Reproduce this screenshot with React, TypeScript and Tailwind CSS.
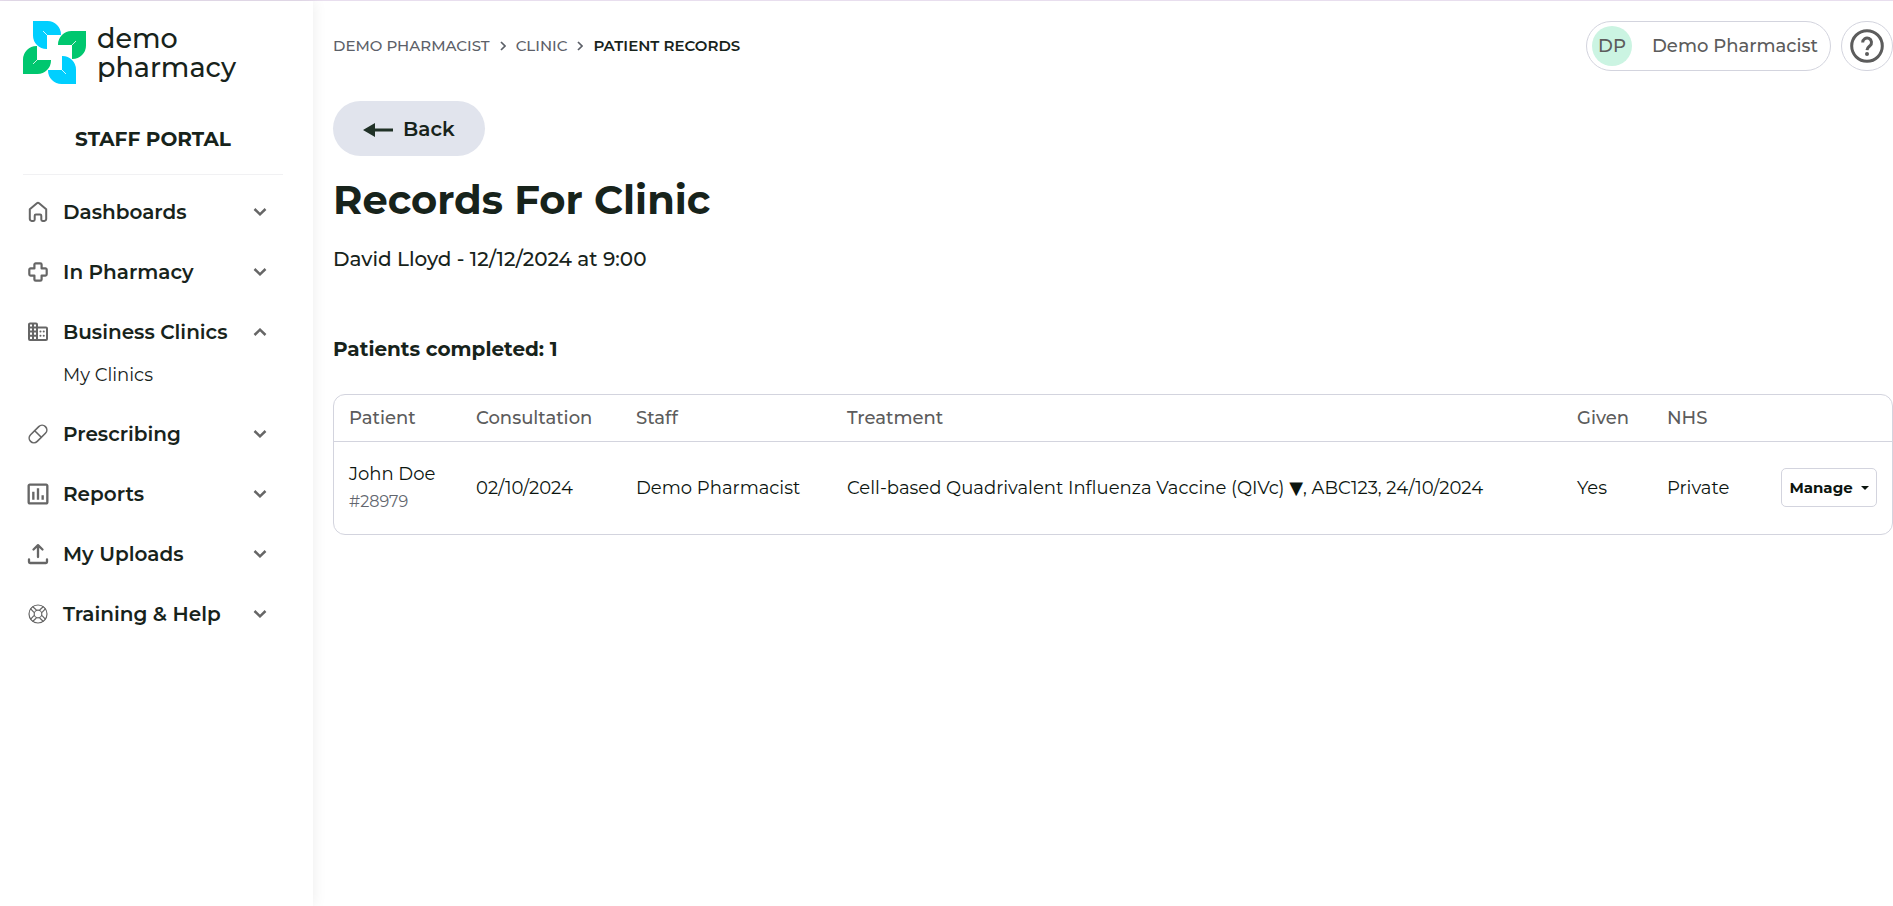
import { useState } from "react";
import type { ReactNode } from "react";
import { MdOutlineInsertChart } from "react-icons/md";

type NavItem = {
  label: string;
  icon: ReactNode;
  children?: string[];
};

const stroke = {
  viewBox: "0 0 20 20",
  fill: "none",
  stroke: "currentColor",
  strokeWidth: 2,
  strokeLinecap: "round",
  strokeLinejoin: "round",
  className: "size-5 shrink-0 overflow-visible",
  "aria-hidden": true,
} as const;

const HomeIcon = () => (
  <svg {...stroke}>
    <path d="M1.8 7.2 8.9 1.2a1.7 1.7 0 0 1 2.2 0l7.1 6v9.9a1.8 1.8 0 0 1-1.8 1.8h-1.8a1.3 1.3 0 0 1-1.3-1.3v-3.9a1.2 1.2 0 0 0-1.2-1.2H7.9a1.2 1.2 0 0 0-1.2 1.2v3.9a1.3 1.3 0 0 1-1.3 1.3H3.6a1.8 1.8 0 0 1-1.8-1.8Z" />
  </svg>
);

const CrossIcon = () => (
  <svg {...stroke} strokeWidth={2.2}>
    <path d="M7.7 1.3h4.6a1.3 1.3 0 0 1 1.3 1.3v3.8h3.8a1.3 1.3 0 0 1 1.3 1.3v4.6a1.3 1.3 0 0 1-1.3 1.3h-3.8v3.8a1.3 1.3 0 0 1-1.3 1.3H7.7a1.3 1.3 0 0 1-1.3-1.3v-3.8H2.6a1.3 1.3 0 0 1-1.3-1.3V7.7a1.3 1.3 0 0 1 1.3-1.3h3.8V2.6a1.3 1.3 0 0 1 1.3-1.3Z" />
  </svg>
);

const BuildingIcon = () => (
  <svg {...stroke}>
    <path d="M1 2.5a1 1 0 0 1 1-1h6a1 1 0 0 1 1 1v3h9a1 1 0 0 1 1 1V17a1 1 0 0 1-1 1H2a1 1 0 0 1-1-1ZM5 1.5V18M9 5.5V18M1 5.5h8M1 9.6h8M1 13.8h8" />
    <path d="M12.4 9.6h.1M12.4 13.8h.1M15.7 9.6h.1M15.7 13.8h.1" />
  </svg>
);

const PillIcon = () => (
  <svg {...stroke} strokeWidth={1.6}>
    <rect x="-0.5" y="5.3" width="21" height="9.4" rx="4.7" transform="rotate(-45 10 10)" />
    <path d="m6.7 6.7 6.6 6.6" />
  </svg>
);

const UploadIcon = () => (
  <svg {...stroke} strokeWidth={2.3}>
    <path d="M10 13V1.5M5.500 5.500 10 1.200l4.500 4.300M1 15.500V18a1 1 0 0 0 1 1h16a1 1 0 0 0 1-1v-2.500" />
  </svg>
);

const LifebuoyIcon = () => (
  <svg {...stroke} strokeWidth={1.2}>
    <circle cx="10" cy="10" r="9" />
    <circle cx="10" cy="10" r="3.8" />
    <path d="m4.800 2.700 3.300 3m-5.400-.9 3 3.300M15.200 2.700l-3.300 3m5.400-.9-3 3.300M4.800 17.300l3.300-3m-5.400.9 3-3.300M15.200 17.300l-3.300-3m5.400.9-3-3.300" />
  </svg>
);

const NAV: NavItem[] = [
  { label: "Dashboards", icon: <HomeIcon /> },
  { label: "In Pharmacy", icon: <CrossIcon /> },
  { label: "Business Clinics", icon: <BuildingIcon />, children: ["My Clinics"] },
  { label: "Prescribing", icon: <PillIcon /> },
  { label: "Reports", icon: <MdOutlineInsertChart className="-m-1 size-7 shrink-0" aria-hidden /> },
  { label: "My Uploads", icon: <UploadIcon /> },
  { label: "Training & Help", icon: <LifebuoyIcon /> },
];

function Chevron({ open }: { open: boolean }) {
  return (
    <svg viewBox="0 0 14 8" className="w-3.5 shrink-0" fill="none" stroke="currentColor" strokeWidth="2.5" aria-hidden>
      <path d={open ? "M1.5 7 7 1.7 12.5 7" : "M1.5 1 7 6.3 12.5 1"} />
    </svg>
  );
}

function Logo() {
  return (
    <a href="#" className="flex items-center gap-[11px] text-[#17231b]">
      <svg viewBox="0 0 63 63" className="size-[63px] shrink-0" aria-hidden>
        <path fill="#00cfff" d="M10 0h14.500A13.500 13.500 0 0 1 38 13.500V14H24v14h-.500A13.500 13.500 0 0 1 10 14.500Z" />
        <path fill="#00c76f" d="M63 10v14.500A13.500 13.500 0 0 1 49.500 38H49V24H35v-.500A13.500 13.500 0 0 1 48.500 10Z" />
        <path fill="#00cfff" d="M53 63H38.500A13.500 13.500 0 0 1 25 49.500V49h14V35h.500A13.500 13.500 0 0 1 53 48.500Z" />
        <path fill="#00c76f" d="M0 53V38.500A13.500 13.500 0 0 1 13.500 25h.500v14h14v.500A13.500 13.500 0 0 1 14.500 53Z" />
        <path stroke="#fff" strokeWidth=".8" d="m20 10 4 4M53 20l-4 4M43 53l-4-4M10 43l4-4" />
      </svg>
      <span className="text-[27px] leading-[29px] font-medium">
        <span className="block">demo</span>
        <span className="block">pharmacy</span>
      </span>
    </a>
  );
}

function Sidebar() {
  const [open, setOpen] = useState("Business Clinics");

  return (
    <aside className="w-[313px] shrink-0 pt-5 pr-[30px] pl-[23px] shadow-[0_0_14px_rgba(0,0,0,0.08)]">
      <Logo />
      <p className="mt-[39px] text-center text-xl leading-8 font-bold">STAFF PORTAL</p>
      <hr className="mt-[19px] border-[#f1f1f3]" />
      <nav className="mt-[7px]" aria-label="Main">
        {NAV.map((item) => {
          const isOpen = open === item.label;
          return (
            <div key={item.label}>
              <button
                type="button"
                onClick={() => setOpen(isOpen ? "" : item.label)}
                aria-expanded={isOpen}
                className="flex h-[60px] w-full items-center pr-4 pl-[5px] text-left text-[#666]"
              >
                {item.icon}
                <span className="ml-[15px] flex-1 text-xl font-semibold text-[#17231b]">{item.label}</span>
                <Chevron open={isOpen} />
              </button>
              {isOpen &&
                item.children?.map((child) => (
                  <a key={child} href="#" className="-mt-1 block h-[46px] pl-10 text-lg leading-[34px]">
                    {child}
                  </a>
                ))}
            </div>
          );
        })}
      </nav>
    </aside>
  );
}

function CrumbArrow() {
  return (
    <svg viewBox="0 0 6 10" className="mx-[10px] h-2.5 w-1.5" fill="none" stroke="currentColor" strokeWidth="1.7" aria-hidden>
      <path d="m1 1 4 4-4 4" />
    </svg>
  );
}

function Header() {
  return (
    <header className="flex items-center justify-between">
      <nav aria-label="Breadcrumb" className="flex items-center text-[15px] leading-6 font-medium text-[#5c6068]">
        <a href="#">DEMO PHARMACIST</a>
        <CrumbArrow />
        <a href="#">CLINIC</a>
        <CrumbArrow />
        <span className="font-semibold text-[#17231b]" aria-current="page">
          PATIENT RECORDS
        </span>
      </nav>
      <div className="flex items-center gap-2.5 text-[#5c5c5c]">
        <button
          type="button"
          className="flex h-[50px] w-[245px] items-center rounded-full border border-[#d3d4de] pl-[5px] text-lg font-medium"
        >
          <span className="grid size-10 place-items-center rounded-full bg-[#cbf4e2]">DP</span>
          <span className="ml-5">Demo Pharmacist</span>
        </button>
        <button
          type="button"
          aria-label="Help"
          className="grid h-[50px] w-[52px] place-items-center rounded-full border border-[#d3d4de]"
        >
          <svg viewBox="0 0 34 34" className="size-[34px]" fill="none" stroke="currentColor" strokeWidth="3" aria-hidden>
            <circle cx="17" cy="17" r="15.3" />
            <path d="M12.700 13.500a4.400 4.400 0 1 1 7.200 3.300c-1.700 1.400-2.800 2.200-2.900 4.300" />
            <circle cx="17" cy="25" r="2" fill="currentColor" stroke="none" />
          </svg>
        </button>
      </div>
    </header>
  );
}

function RecordsTable() {
  return (
    <div className="mt-[30px] overflow-hidden rounded-xl border border-[#d3d4de]">
      <table className="w-full table-fixed text-left text-lg">
        <colgroup>
          <col className="w-[127px]" />
          <col className="w-[160px]" />
          <col className="w-[211px]" />
          <col />
          <col className="w-[90px]" />
          <col className="w-[114px]" />
          <col className="w-[126px]" />
        </colgroup>
        <thead>
          <tr className="h-[46px] border-b border-[#d3d4de] text-[#5c5c5c]">
            <th className="px-[15px] font-medium">Patient</th>
            <th className="px-[15px] font-medium">Consultation</th>
            <th className="px-[15px] font-medium">Staff</th>
            <th className="px-[15px] font-medium">Treatment</th>
            <th className="px-[15px] font-medium">Given</th>
            <th className="px-[15px] font-medium">NHS</th>
            <th aria-label="Actions" />
          </tr>
        </thead>
        <tbody>
          <tr className="h-[93px] text-[#0c150f]">
            <td className="px-[15px] whitespace-nowrap">
              <div className="leading-7">John Doe</div>
              <div className="text-base leading-7 text-[#62666e]">#28979</div>
            </td>
            <td className="px-[15px]">02/10/2024</td>
            <td className="px-[15px] whitespace-nowrap">Demo Pharmacist</td>
            <td className="px-[15px]">
              Cell-based Quadrivalent Influenza Vaccine (QIVc){" "}
              <span className="font-['DejaVu_Sans',sans-serif] text-lg leading-none">▼</span>, ABC123, 24/10/2024
            </td>
            <td className="px-[15px]">Yes</td>
            <td className="px-[15px]">Private</td>
            <td className="px-[15px]">
              <button
                type="button"
                className="flex h-[39px] w-full items-center justify-center gap-2 rounded-[5px] border border-[#d3d4de] text-[15px] font-bold"
              >
                Manage
                <span className="border-x-4 border-t-4 border-x-transparent border-t-current" />
              </button>
            </td>
          </tr>
        </tbody>
      </table>
    </div>
  );
}

export default function App() {
  return (
    <div className="flex min-h-screen border-t border-[#e8deee] bg-white font-['Montserrat','Inter',sans-serif] text-[#17231b]">
      <Sidebar />
      <main className="min-w-0 flex-1 pt-5 pl-5">
        <Header />
        <button
          type="button"
          className="mt-[30px] flex h-[55px] items-center gap-2.5 rounded-full bg-[#e1e4ed] px-[30px] text-xl font-semibold"
        >
          <svg viewBox="0 0 30 14" className="mt-0.5 w-[30px]" aria-hidden>
            <path fill="#203127" d="M0 7 12 0v5.500h18v3H12V14Z" />
          </svg>
          Back
        </button>
        <h1 className="mt-5 text-[40px] leading-[48px] font-bold">Records For Clinic</h1>
        <p className="mt-5 text-xl leading-[30px] font-medium">David Lloyd - 12/12/2024 at 9:00</p>
        <h2 className="mt-[60px] text-xl leading-[30px] font-bold">Patients completed: 1</h2>
        <RecordsTable />
      </main>
    </div>
  );
}
